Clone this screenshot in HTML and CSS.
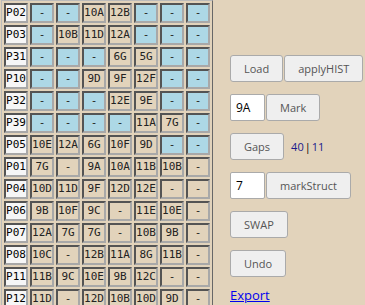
FILE: index.html
```html
<!DOCTYPE html>
<html lang="en">
<head>
  <meta charset="UTF-8">
  <title>Plan</title>
  <link rel="stylesheet" href="styles.css">
</head>
<body>
  <div class="page">
    <table class="grid" id="grid"></table>

    <div class="panel">
      <div class="row">
        <button>Load</button><button>applyHIST</button>
      </div>
      <div class="row">
        <input type="text" value="9A"><button>Mark</button>
      </div>
      <div class="row">
        <button>Gaps</button>
        <span class="gaps"><span class="num">40</span><span class="sep">|</span><span class="num">11</span></span>
      </div>
      <div class="row">
        <input type="text" value="7"><button>markStruct</button>
      </div>
      <div class="row">
        <button>SWAP</button>
      </div>
      <div class="row">
        <button>Undo</button>
      </div>
      <div class="row">
        <a href="#">Export</a>
      </div>
    </div>
  </div>

  <script>
    // '' = free (blue), '-' = empty slot (beige), anything else = assigned
    const rows = [
      ['P02', ['', '', '10A', '12B', '', '', '']],
      ['P03', ['', '10B', '11D', '12A', '', '', '']],
      ['P31', ['', '', '', '6G', '5G', '', '']],
      ['P10', ['', '', '9D', '9F', '12F', '', '']],
      ['P32', ['', '', '', '12E', '9E', '', '']],
      ['P39', ['', '', '', '', '11A', '7G', '']],
      ['P05', ['10E', '12A', '6G', '10F', '9D', '', '']],
      ['P01', ['7G', '-', '9A', '10A', '11B', '10B', '-']],
      ['P04', ['10D', '11D', '9F', '12D', '12E', '-', '-']],
      ['P06', ['9B', '10F', '9C', '-', '11E', '10E', '-']],
      ['P07', ['12A', '7G', '7G', '-', '10B', '9B', '-']],
      ['P08', ['10C', '-', '12B', '11A', '8G', '11B', '-']],
      ['P11', ['11B', '9C', '10E', '9B', '12C', '-', '-']],
      ['P12', ['11D', '-', '12D', '10B', '10D', '9D', '-']]
    ];

    const grid = document.getElementById('grid');
    rows.forEach(([name, cells]) => {
      const tr = document.createElement('tr');
      const th = document.createElement('td');
      th.className = 'label';
      th.textContent = name;
      tr.appendChild(th);
      cells.forEach(c => {
        const td = document.createElement('td');
        if (c === '') {
          td.className = 'free';
          td.textContent = '-';
        } else {
          td.textContent = c;
        }
        tr.appendChild(td);
      });
      grid.appendChild(tr);
    });
  </script>
</body>
</html>
```

FILE: styles.css
```css
body {
  margin: 0;
  background: #e2d3bb;
  font-family: 'Open Sans', sans-serif;
  overflow: hidden;
}
.page {
  display: flex;
  align-items: flex-start;
}
.grid {
  border: 1px outset #bbb;
  border-spacing: 2px;
  margin-left: 1px;
  font-family: 'DejaVu Sans Mono', monospace;
  font-size: 11px;
}
.grid td {
  box-sizing: border-box;
  border: 2px inset #a8a8a8;
  min-width: 24px;
  width: 24px;
  height: 20px;
  line-height: 16px;
  padding: 0;
  text-align: center;
  color: #222;
  background: #e2d3bb;
}
.grid td.label {
  background: #f6f6f6;
  color: #000;
}
.grid td.free {
  background: #add8e6;
}
.panel {
  margin-left: 17px;
  padding-top: 55px;
  display: flex;
  flex-direction: column;
  gap: 12px;
}
.row {
  display: flex;
  align-items: center;
  gap: 1px;
}
button {
  height: 27px;
  padding: 0 13px;
  font-family: 'Open Sans', sans-serif;
  font-size: 11px;
  color: #555;
  background: #efefef;
  border: 1px solid #aaa;
  border-radius: 3px;
}
input {
  box-sizing: border-box;
  width: 35px;
  height: 27px;
  padding: 0 5px;
  font-family: 'Open Sans', sans-serif;
  font-size: 12px;
  border: 1px solid #aaa;
  border-radius: 2px;
  background: #fff;
}
.gaps {
  margin-left: 6px;
  font-size: 11px;
  color: #000;
}
.gaps .num {
  color: #1a1a8c;
}
.gaps .sep {
  margin: 0 1px;
}
a {
  color: #0000ee;
  font-size: 13px;
  margin-top: -3px;
}
```
